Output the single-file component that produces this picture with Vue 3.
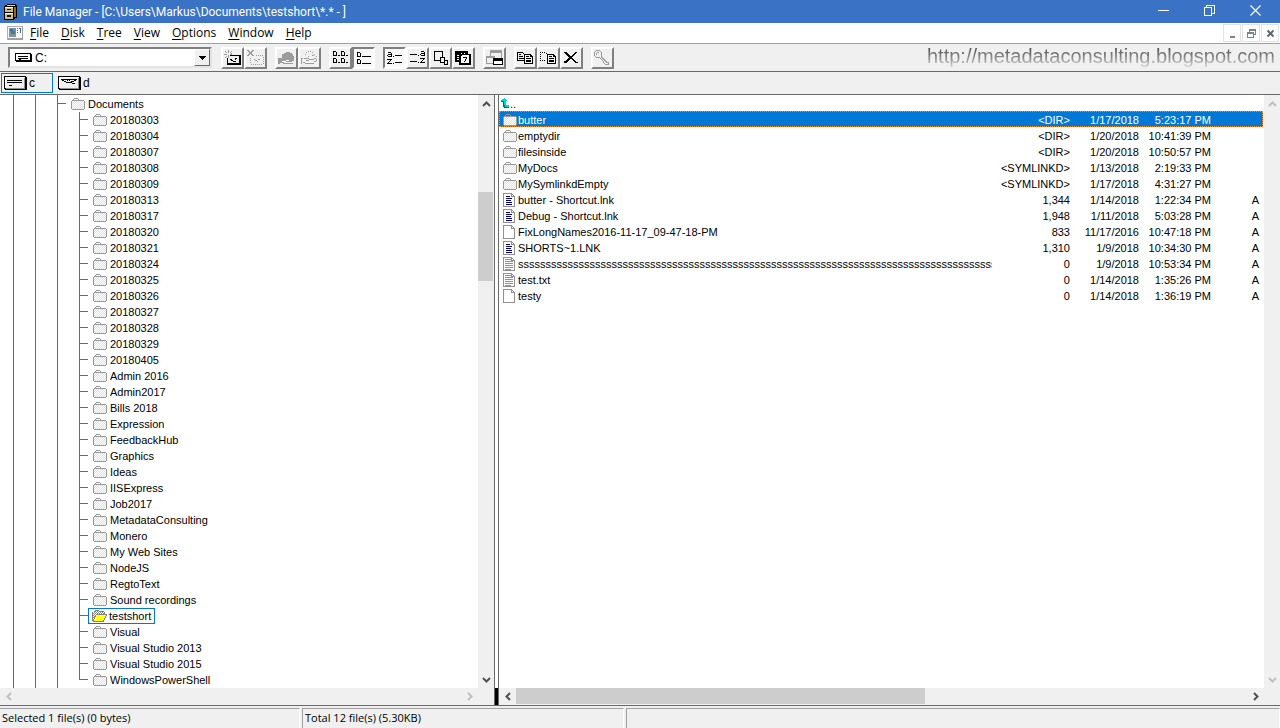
<script setup>
import { ref } from 'vue'

const menus = ['File', 'Disk', 'Tree', 'View', 'Options', 'Window', 'Help']

const folders = [
  '20180303', '20180304', '20180307', '20180308', '20180309', '20180313',
  '20180317', '20180320', '20180321', '20180324', '20180325', '20180326',
  '20180327', '20180328', '20180329', '20180405', 'Admin 2016', 'Admin2017',
  'Bills 2018', 'Expression', 'FeedbackHub', 'Graphics', 'Ideas', 'IISExpress',
  'Job2017', 'MetadataConsulting', 'Monero', 'My Web Sites', 'NodeJS',
  'RegtoText', 'Sound recordings', 'testshort', 'Visual',
  'Visual Studio 2013', 'Visual Studio 2015', 'WindowsPowerShell',
]
const current = ref('testshort')

const files = [
  { icon: 'dir', name: 'butter', size: '<DIR>', date: '1/17/2018', time: '5:23:17 PM', attr: '' },
  { icon: 'dir', name: 'emptydir', size: '<DIR>', date: '1/20/2018', time: '10:41:39 PM', attr: '' },
  { icon: 'dir', name: 'filesinside', size: '<DIR>', date: '1/20/2018', time: '10:50:57 PM', attr: '' },
  { icon: 'dir', name: 'MyDocs', size: '<SYMLINKD>', date: '1/13/2018', time: '2:19:33 PM', attr: '' },
  { icon: 'dir', name: 'MySymlinkdEmpty', size: '<SYMLINKD>', date: '1/17/2018', time: '4:31:27 PM', attr: '' },
  { icon: 'link', name: 'butter - Shortcut.lnk', size: '1,344', date: '1/14/2018', time: '1:22:34 PM', attr: 'A' },
  { icon: 'link', name: 'Debug - Shortcut.lnk', size: '1,948', date: '1/11/2018', time: '5:03:28 PM', attr: 'A' },
  { icon: 'file', name: 'FixLongNames2016-11-17_09-47-18-PM', size: '833', date: '11/17/2016', time: '10:47:18 PM', attr: 'A' },
  { icon: 'link', name: 'SHORTS~1.LNK', size: '1,310', date: '1/9/2018', time: '10:34:30 PM', attr: 'A' },
  { icon: 'text', name: 's'.repeat(95), size: '0', date: '1/9/2018', time: '10:53:34 PM', attr: 'A' },
  { icon: 'text', name: 'test.txt', size: '0', date: '1/14/2018', time: '1:35:26 PM', attr: 'A' },
  { icon: 'file', name: 'testy', size: '0', date: '1/14/2018', time: '1:36:19 PM', attr: 'A' },
]
const selected = ref('butter')

// Glyphs are drawn on a 19 x 18 grid: g = grey, k = black, fg/fk = filled shapes.
const tools = [
  [
    { id: 'connect', label: 'Connect network drive',
      k: 'M7 6.5h10M4.5 9v6M4 14.5h14M4 15.5h14M16.5 6v9M17.5 6v9M7 10.5h2M8 11.5h2M10 12.5h3M12 9.5h2M12 10.5h1',
      g: 'M5.5 1v3M5.5 6v3M1 5.5h3M7 5.5h2M2.5 2v1M3.5 3v1M8.5 2v1M7.5 3v1M2.5 8v1M3.5 7v1M8.5 4v1' },
    { id: 'disconnect', label: 'Disconnect network drive', off: true,
      g: 'M1 1.5h2M6 1.5h2M2 2.5h2M5 2.5h2M3 3.5h3M3 4.5h3M2 5.5h2M5 5.5h2M1 6.5h2M6 6.5h2M10 6.5h1M12 6.5h1M14 6.5h1M16 6.5h1M4.5 9v1M4.5 11v1M4.5 13v1M17.5 8v1M17.5 10v1M17.5 12v1M17.5 14v1M5 15.5h1M7 15.5h1M9 15.5h1M11 15.5h1M13 15.5h1M15 15.5h1M8 10.5h1M9 11.5h2M12 10.5h2M11 12.5h1' },
  ],
  [
    { id: 'share', label: 'Share as', off: true, fg: 'M5 5h2V4h2V3h4v1h2v1h1v2h1v5h-2v1H7v1h9v1H6v-1H3v1H1V9h4z',
      w: 'M5 12.5h4M9 11.5h3' },
    { id: 'unshare', label: 'Stop sharing', off: true,
      g: 'M6 3.5h1M8 2.5h1M10 2.5h1M12 3.5h1M5 5.5h1M14 5.5h1M16 7.5h1M1 9.5h2M4 9.5h5M9 10.5h5M6 11.5h3M1.5 10v5M14 9.5h2M16 10.5h1M16 11.5h1M14 12.5h2M5 14.5h9M3 13.5h2M12 6.5h2M8 7.5h1' },
  ],
  [
    { id: 'names', label: 'View name',
      k: 'M2 2.5h3M2.5 2v5M2 6.5h4M5.5 3v4M7 6.5h2M10 2.5h3M10.5 2v5M10 6.5h4M13.5 3v4M15 6.5h2M2 9.5h3M2.5 9v5M2 13.5h4M5.5 10v4M7 13.5h2M10 9.5h3M10.5 9v5M10 13.5h4M13.5 10v4M15 13.5h2' },
    { id: 'details', label: 'View file details', on: true,
      k: 'M3 3.5h3M3.5 3v5M3 7.5h4M6.5 4v4M8 7.5h9M3 10.5h3M3.5 10v5M3 14.5h4M6.5 11v4M8 14.5h9' },
  ],
  [
    { id: 'sort-name', label: 'Sort by name', on: true,
      k: 'M3 3.5h3M6.5 4v4M3 5.5h3M2.5 6v1M3 7.5h4M8 7.5h1M10 6.5h7M2 10.5h5M5 11.5h1M4 12.5h1M3 13.5h1M2 14.5h5M8 14.5h1M10 13.5h7' },
    { id: 'sort-type', label: 'Sort by type',
      k: 'M2 5.5h7M10 6.5h1M13 2.5h3M16.5 3v4M13 4.5h3M12.5 5v1M13 6.5h4M2 12.5h7M10 13.5h1M12 9.5h5M15 10.5h1M14 11.5h1M13 12.5h1M12 13.5h5' },
    { id: 'sort-size', label: 'Sort by size',
      k: 'M3 2.5h9M3.5 2v10M3 11.5h6M11.5 2v6M9 8.5h5M9.5 8v6M9 13.5h4M13.5 8v4M13 11.5h4M13.5 11v5M13 15.5h4M16.5 11v5' },
    { id: 'sort-date', label: 'Sort by date',
      fk: 'M1 2h13v3h3v11H5v-3H1z', w: 'M3 6.5h2M3 8.5h2M3 10.5h2M7 4.5h1M10 4.5h1M8 6.5h7M7 7.5h8M7 8.5h8M7 9.5h8M7 10.5h8M7 11.5h8M7 12.5h8M7 13.5h8',
      k2: 'M9 8.5h4M12.5 8v2M11.5 10v2M10.5 12v1' },
  ],
  [
    { id: 'new-window', label: 'New window', fg: 'M5 1h12v8h-1V4H6v3H5zM1 7h9v2H2v5h6v1H1z',
      fk: 'M8 9h10v7H8z', w: 'M9 12.5h8M9 13.5h8M9 14.5h8' },
  ],
  [
    { id: 'copy', label: 'Copy',
      k: 'M1 3.5h6M1.5 3v9M1 11.5h8M3 5.5h2M3 7.5h4M3 9.5h5M8 5.5h6M8.5 5v10M8 14.5h9M16.5 8v7M14.5 5v3M14 7.5h3M7.5 4v1M15.5 6v1M10 7.5h3M10 9.5h5M10 11.5h5M10 12.5h5' },
    { id: 'move', label: 'Move',
      k: 'M1 3.5h1M3 3.5h1M5 3.5h1M7 4.5h1M1.5 5v1M1.5 7v1M1.5 9v1M1 11.5h1M3 11.5h1M5 11.5h1M8 5.5h6M8.5 5v10M8 14.5h9M16.5 8v7M14.5 5v3M14 7.5h3M15.5 6v1M10 7.5h3M10 9.5h5M10 11.5h5M10 12.5h5' },
    { id: 'delete', label: 'Delete',
      fk: 'M2 3h3v1h1v1h1v1h1v1h2V6h1V5h1V4h1V3h2v1h-1v1h-1v1h-1v1h-1v1h-1v1h1v1h1v1h1v1h1v1h2v1h-3v-1h-1v-1h-1v-1h-1v-1H8v1H7v1H6v1H5v1H2v-2h2v-1h1v-1h1v-1h1V8H6V7H5V6H4V5H3V4H2z' },
  ],
  [
    { id: 'security', label: 'Permissions', off: true,
      g: 'M3 1.5h4M2.5 2v1M1.5 3v4M7.5 2v1M8.5 3v4M2.5 7v1M3 8.5h4M4 3.5h2M3.5 4v2M8 7.5h1M7 9.5h1M8 10.5h1M9 11.5h1M10 12.5h1M10 13.5h1M11 14.5h1M12 15.5h4M9 8.5h1M10 9.5h1M11 10.5h1M12 11.5h1M13 12.5h1M14 13.5h1M15.5 13v3M8 8.5h1M9 9.5h1M10 10.5h1M11 11.5h1M12 12.5h1M13 13.5h1' },
  ],
]
</script>

<template>
  <div class="window">
    <svg class="defs" width="0" height="0" aria-hidden="true">
      <defs>
        <symbol id="folder" viewBox="0 0 14 12">
          <path d="M1 2h12v9H1z" fill="#fff" />
          <path d="M1 3.5h12M1 5.5h12M1 7.5h12M1 9.5h12M2 4.5h11M2 6.5h11M2 8.5h11M2 10.5h11" stroke="#ff0" stroke-dasharray="1 1" />
          <path d="M2 1.5h1M3 .5h4M7 1.5h1M1 2.5h12M.5 3v8M1 11.5h12M13.5 3v8" stroke="#999" />
        </symbol>
        <symbol id="folder-open" viewBox="0 0 15 12">
          <path d="M1 3V2h2V1h4v1h5v3H5L2 10H1z" fill="#fff" />
          <path d="M3 1.5h4M2 2.5h10M1 3.5h11M2 4.5h2M1 5.5h3M2 6.5h1M1 7.5h2" stroke="#808080" stroke-dasharray="1 1" />
          <path d="M4 5h10v1h-1v2h-1v2h-1v1H2V9h1V7h1z" fill="#fff" />
          <path d="M5 5.5h9M4 6.5h9M5 7.5h8M4 8.5h8M3 9.5h9M2 10.5h9" stroke="#ff0" stroke-dasharray="1 1" />
          <path d="M2 1.5h1M3 .5h4M7 1.5h5M.5 2v9M12.5 2v3M4 4.5h11M14 5.5h1M13 6.5h1M13 7.5h1M12 8.5h1M12 9.5h1M11 10.5h1M1 11.5h11M3.5 5v2M2.5 7v2M1.5 9v2" stroke="#808080" />
        </symbol>
        <symbol id="page" viewBox="0 0 12 14">
          <path d="M.5.5h8l3 3v10H.5z" fill="#fff" stroke="#909090" />
          <path d="M8.5 0v4M8 3.5h4" stroke="#909090" />
        </symbol>
        <symbol id="drive" viewBox="0 0 23 14">
          <path d="M0 0h22v1h1v13H1v-1H0z" fill="#000" />
          <path d="M1 1h20v11H1z" fill="#efefef" />
          <path d="M1 1h20v1H2v10H1z" fill="#fff" />
          <path d="M20 2h1v11H2v-1h18z" fill="#909090" />
        </symbol>
      </defs>
    </svg>

    <header class="titlebar">
      <svg class="app-icon" width="13" height="16" viewBox="0 0 13 16" shape-rendering="crispEdges" aria-hidden="true">
        <path d="M0 2h1V1h2V0h9v1h1v13h-2v1h-1v1H0z" fill="#000" />
        <path d="M3 1h8v1H3z" fill="#e8d8a0" />
        <path d="M10 3h2v10h-2z" fill="#8c6a32" />
        <path d="M1 3h8v5H1zM1 9h8v6H1z" fill="#cdbd8c" />
        <path d="M1 3h8v1H1zM1 9h8v1H1z" fill="#fff" />
        <path d="M3 5h4v1H3zM3 11h4v2H3z" fill="#1c1810" />
      </svg>
      <h1>File Manager - [C:\Users\Markus\Documents\testshort\*.* - ]</h1>
      <div class="caption">
        <button type="button" aria-label="Minimize">
          <svg width="11" height="11" viewBox="0 0 11 11" shape-rendering="crispEdges"><path d="M0 5.5h11" stroke="#fff" /></svg>
        </button>
        <button type="button" aria-label="Restore">
          <svg width="11" height="11" viewBox="0 0 11 11" shape-rendering="crispEdges"><path d="M.5 2.5h7v8h-7zM2.5 2V.5h8v7.5H8" fill="none" stroke="#fff" /></svg>
        </button>
        <button type="button" aria-label="Close">
          <svg width="11" height="11" viewBox="0 0 11 11"><path d="M.5.5l10 10M10.5.5l-10 10" stroke="#fff" stroke-width="1.2" /></svg>
        </button>
      </div>
    </header>

    <nav class="menubar" aria-label="Main menu">
      <svg class="doc-icon" width="16" height="14" viewBox="0 0 16 14" shape-rendering="crispEdges" aria-hidden="true">
        <path d="M.5.5h15v13H.5z" fill="#fff" stroke="#b0b0b0" />
        <path d="M15.5 1v13M1 12.5h15M1 13.5h15" stroke="#a0a0a0" />
        <path d="M2 2h7v9H2z" fill="#7d94a8" />
        <path d="M3 3h3v2H3z" fill="#3b6fb0" />
        <path d="M4 5h4v3H4z" fill="#4e8068" />
        <path d="M10 2.5h1M12 2.5h1M10 4.5h1M13.5 2v5M10 6.5h1" stroke="#3b72c4" />
      </svg>
      <button v-for="m in menus" :key="m" type="button" class="menu"><u>{{ m[0] }}</u>{{ m.slice(1) }}</button>
      <div class="mdi">
        <button type="button" aria-label="Minimize document">
          <svg width="11" height="11" viewBox="0 0 11 11" shape-rendering="crispEdges"><path d="M3 8h5v2H3z" fill="#7a828c" /></svg>
        </button>
        <button type="button" aria-label="Restore document">
          <svg width="11" height="11" viewBox="0 0 11 11" shape-rendering="crispEdges">
            <path d="M3 1h7v6H8V6h1V3H4v1H3zM1 4h7v6H1zM2 6v3h5V6z" fill="#7a828c" fill-rule="evenodd" />
          </svg>
        </button>
        <button type="button" aria-label="Close document">
          <svg width="11" height="11" viewBox="0 0 11 11"><path d="M2.5 2.5l6 6M8.5 2.5l-6 6" stroke="#606870" stroke-width="2" /></svg>
        </button>
      </div>
    </nav>

    <div class="toolbar">
      <label class="combo">
        <svg width="17" height="9" viewBox="0 0 17 9" shape-rendering="crispEdges" aria-hidden="true">
          <path d="M0 0h16v1h1v8H1V8H0z" fill="#000" />
          <path d="M1 1h14v6H1z" fill="#fff" />
          <path d="M3 3.5h10M3 5.5h10M4 6.5h2" stroke="#000" />
        </svg>
        <select aria-label="Drive"><option>C:</option><option>D:</option></select>
        <span class="drop" aria-hidden="true">
          <svg width="7" height="4" viewBox="0 0 7 4" shape-rendering="crispEdges"><path d="M0 0h7v1H0zM1 1h5v1H1zM2 2h3v1H2zM3 3h1v1H3z" /></svg>
        </span>
      </label>
      <div v-for="(group, gi) in tools" :key="gi" class="group">
        <button v-for="t in group" :key="t.id" type="button" class="tool" :class="{ on: t.on }" :disabled="t.off" :aria-label="t.label">
          <svg width="19" height="18" viewBox="0 0 19 18" shape-rendering="crispEdges" fill="none" aria-hidden="true">
            <path v-if="t.fg" :d="t.fg" fill="#9c9c9c" />
            <path v-if="t.fk" :d="t.fk" fill="#000" />
            <path v-if="t.w" :d="t.w" stroke="#fff" />
            <path v-if="t.g" :d="t.g" stroke="#9c9c9c" />
            <path v-if="t.k" :d="t.k" stroke="#000" />
            <path v-if="t.k2" :d="t.k2" stroke="#000" />
          </svg>
        </button>
      </div>
      <span class="watermark">http://metadataconsulting.blogspot.com</span>
    </div>

    <div class="drives">
      <button type="button" class="drive active">
        <svg width="23" height="14" viewBox="0 0 23 14" shape-rendering="crispEdges" aria-hidden="true">
          <use href="#drive" />
          <path d="M3 4.5h15M3 6.5h15M5 9.5h3" stroke="#000" />
        </svg>c
      </button>
      <button type="button" class="drive">
        <svg width="23" height="14" viewBox="0 0 23 14" shape-rendering="crispEdges" aria-hidden="true">
          <use href="#drive" />
          <path d="M3 3.5h16M4 4.5h2M6 5.5h2M8 6.5h6M9 4.5h1M11 4.5h1M13 5.5h3M16 4.5h2M14 7.5h3" stroke="#000" />
        </svg>d
      </button>
    </div>

    <main class="panes">
      <section class="tree-pane" aria-label="Folders">
        <ul class="tree">
          <li class="root">
            <span class="branch"></span>
            <span class="node">
              <svg width="14" height="12" shape-rendering="crispEdges" aria-hidden="true"><use href="#folder" /></svg>Documents
            </span>
          </li>
          <li v-for="f in folders" :key="f" @click="current = f">
            <span class="branch"></span>
            <span class="node" :class="{ current: f === current }">
              <svg v-if="f === current" width="15" height="12" shape-rendering="crispEdges" aria-hidden="true"><use href="#folder-open" /></svg>
              <svg v-else width="14" height="12" shape-rendering="crispEdges" aria-hidden="true"><use href="#folder" /></svg>{{ f }}
            </span>
          </li>
        </ul>
        <div class="vscroll">
          <button type="button" aria-label="Scroll up"><svg width="9" height="6" viewBox="0 0 9 6"><path d="M1 5l3.500-3.500L8 5" /></svg></button>
          <div class="track"><div class="thumb"></div></div>
          <button type="button" aria-label="Scroll down"><svg width="9" height="6" viewBox="0 0 9 6"><path d="M1 1l3.500 3.500L8 1" /></svg></button>
        </div>
        <div class="hscroll">
          <button type="button" disabled aria-label="Scroll left"><svg width="6" height="9" viewBox="0 0 6 9"><path d="M5 1L1.500 4.500 5 8" /></svg></button>
          <div class="track"></div>
          <button type="button" disabled aria-label="Scroll right"><svg width="6" height="9" viewBox="0 0 6 9"><path d="M1 1l3.500 3.500L1 8" /></svg></button>
        </div>
        <div class="corner"></div>
      </section>

      <div class="splitter"><div class="grip"></div></div>

      <section class="list-pane" aria-label="Files">
        <div class="list">
          <table>
            <colgroup><col><col class="c-size"><col class="c-date"><col class="c-time"><col class="c-attr"></colgroup>
            <tbody>
              <tr>
                <td class="name" colspan="5">
                  <div class="cell up">
                    <svg width="8" height="10" viewBox="0 0 8 10" shape-rendering="crispEdges" aria-hidden="true">
                      <path d="M3 0h1v1h1v1h1v1H5v4h3v2H3V3H0V2h1V1h2z" fill="#00d8d8" />
                      <path d="M0 3h3v4h1v2h4v1H3V9H2V4H0z" fill="#006c6c" />
                    </svg>..
                  </div>
                </td>
              </tr>
              <tr v-for="f in files" :key="f.name" :class="{ selected: f.name === selected }" @click="selected = f.name">
                <td class="name">
                  <div class="cell">
                    <svg v-if="f.icon === 'dir'" width="14" height="12" shape-rendering="crispEdges" class="dir" aria-hidden="true"><use href="#folder" /></svg>
                    <svg v-else width="12" height="14" viewBox="0 0 12 14" shape-rendering="crispEdges" class="page" aria-hidden="true">
                      <use href="#page" />
                      <path v-if="f.icon === 'link'" d="M3 3.5h4M3 5.5h6M3 7.5h5M3 9.5h6M3 11.5h6" stroke="#000080" />
                      <path v-if="f.icon === 'text'" d="M2 2.5h6M2 4.5h8M2 6.5h8M2 8.5h8M2 10.5h8M2 12.5h6" stroke="#909090" />
                    </svg>
                    <span>{{ f.name }}</span>
                  </div>
                </td>
                <td>{{ f.size }}</td>
                <td>{{ f.date }}</td>
                <td>{{ f.time }}</td>
                <td class="attr">{{ f.attr }}</td>
              </tr>
            </tbody>
          </table>
        </div>
        <div class="vscroll">
          <button type="button" disabled aria-label="Scroll up"><svg width="9" height="6" viewBox="0 0 9 6"><path d="M1 5l3.500-3.500L8 5" /></svg></button>
          <div class="track"></div>
          <button type="button" disabled aria-label="Scroll down"><svg width="9" height="6" viewBox="0 0 9 6"><path d="M1 1l3.500 3.500L8 1" /></svg></button>
        </div>
        <div class="hscroll">
          <button type="button" aria-label="Scroll left"><svg width="6" height="9" viewBox="0 0 6 9"><path d="M5 1L1.500 4.500 5 8" /></svg></button>
          <div class="track"><div class="thumb"></div></div>
          <button type="button" aria-label="Scroll right"><svg width="6" height="9" viewBox="0 0 6 9"><path d="M1 1l3.500 3.500L1 8" /></svg></button>
        </div>
        <div class="corner"></div>
      </section>
    </main>

    <footer class="status">
      <div>Selected 1 file(s) (0 bytes)</div>
      <div>Total 12 file(s) (5.30KB)</div>
      <div></div>
    </footer>
  </div>
</template>

<style>
html,
body,
#app {
  height: 100%;
  margin: 0;
}
</style>

<style scoped>
* {
  box-sizing: border-box;
}
.window {
  display: flex;
  flex-direction: column;
  height: 100%;
  overflow: hidden;
  background: #f0f0f0;
  color: #000;
  font: 11px/16px "Liberation Sans", Arial, sans-serif;
}
.defs {
  position: absolute;
}
svg {
  display: block;
  flex: none;
}
button {
  display: flex;
  align-items: center;
  justify-content: center;
  margin: 0;
  padding: 0;
  border: 0;
  background: none;
  color: inherit;
  font: inherit;
}

.titlebar {
  display: flex;
  align-items: center;
  flex: none;
  height: 23px;
  padding-left: 4px;
  background: #3a72c6;
  color: #fff;
}
.titlebar h1 {
  margin: 0 0 0 6px;
  font: 12px/20px Roboto, sans-serif;
  white-space: pre;
}
.caption {
  display: flex;
  height: 21px;
  margin-left: auto;
  padding-right: 2px;
  align-self: flex-start;
}
.caption button {
  width: 46px;
}

.menubar {
  display: flex;
  align-items: center;
  flex: none;
  height: 21px;
  padding: 0 1px 0 7px;
  background: #fff;
  border-bottom: 1px solid #a0a0a0;
  font: 12px/18px "Open Sans", sans-serif;
}
.doc-icon {
  margin-right: 1px;
}
.menu {
  padding: 0 6px;
}
.menu u {
  text-underline-offset: 2px;
}
.mdi {
  display: flex;
  gap: 1px;
  margin-left: auto;
}
.mdi button {
  width: 18px;
  height: 18px;
  border: 1px solid #e2e2e2;
}

.toolbar {
  display: flex;
  align-items: center;
  flex: none;
  gap: 8px;
  height: 28px;
  padding: 0 5px 0 8px;
  border-bottom: 1px solid #696969;
}
.combo {
  display: flex;
  align-items: center;
  width: 204px;
  height: 21px;
  margin-right: 1px;
  padding-left: 5px;
  background: #fff;
  border: 2px solid;
  border-color: #808080 #e3e3e3 #e3e3e3 #808080;
}
.combo select {
  flex: 1;
  min-width: 0;
  padding: 0 0 0 3px;
  border: 0;
  background: none;
  appearance: none;
  color: #000;
  font: inherit;
  font-size: 12px;
}
.drop {
  display: flex;
  align-items: center;
  justify-content: center;
  width: 16px;
  height: 17px;
  background: #f0f0f0;
  border: 1px solid;
  border-color: #fff #696969 #696969 #fff;
}
.group {
  display: flex;
}
.tool {
  width: 23px;
  height: 22px;
  border: 2px solid;
  border-color: #fff #808080 #808080 #fff;
  background: #f0f0f0;
}
.tool.on {
  border-color: #808080 #fff #fff #808080;
  background: #f8f8f8;
}
.watermark {
  margin-left: auto;
  padding-bottom: 3px;
  font-size: 20px;
  line-height: 24px;
  white-space: nowrap;
  color: transparent;
  background: linear-gradient(#505050 15%, #8c8c8c 50%, #dedede 90%);
  background-clip: text;
}

.drives {
  display: flex;
  align-items: center;
  flex: none;
  gap: 2px;
  height: 23px;
  padding-left: 1px;
  border-bottom: 1px solid #696969;
}
.drive {
  justify-content: flex-start;
  gap: 2px;
  width: 52px;
  height: 20px;
  padding-left: 2px;
  border: 1px solid transparent;
  font-size: 12px;
}
.drive.active {
  border-color: #0078d7;
}

.panes {
  display: grid;
  grid-template-columns: minmax(0, 494fr) 5px minmax(0, 781fr);
  flex: 1;
  min-height: 0;
  border-bottom: 1px solid #696969;
}
.tree-pane,
.list-pane {
  display: grid;
  grid-template-columns: minmax(0, 1fr) 16px;
  grid-template-rows: minmax(0, 1fr) 17px;
  min-height: 0;
}
.tree {
  margin: 0;
  padding: 1px 0 0 57px;
  overflow: hidden;
  list-style: none;
  background:
    linear-gradient(#696969, #696969) 13px 0 / 1px 100% no-repeat,
    linear-gradient(#696969, #696969) 35px 0 / 1px 100% no-repeat,
    linear-gradient(#696969, #696969) 57px 0 / 1px 100% no-repeat,
    #fff;
}
.tree li {
  display: flex;
  height: 16px;
  padding-left: 22px;
}
.tree li.root {
  padding-left: 0;
}
.branch {
  width: 9px;
  background:
    linear-gradient(#696969, #696969) 0 7px / 9px 1px no-repeat,
    linear-gradient(#696969, #696969) 0 0 / 1px 100% no-repeat;
}
.tree li:last-child .branch {
  background-size: 9px 1px, 1px 8px;
}
.node {
  display: flex;
  align-items: center;
  gap: 3px;
  padding: 0 3px 0 5px;
  white-space: nowrap;
}
.node svg {
  align-self: flex-start;
  margin-top: 2px;
}
.node.current {
  gap: 2px;
  padding-left: 3px;
  border: 1px solid #0078d7;
}
.node.current svg {
  margin-top: 1px;
}

.vscroll,
.hscroll {
  display: flex;
  background: #f0f0f0;
}
.vscroll {
  flex-direction: column;
}
.vscroll button {
  height: 17px;
}
.hscroll button {
  width: 17px;
}
.track {
  display: flex;
  flex: 1;
  min-width: 0;
  min-height: 0;
}
.vscroll .track {
  flex-direction: column;
}
.vscroll .thumb {
  width: 15px;
  height: 16%;
  margin-top: 80px;
  background: #cdcdcd;
}
.hscroll .thumb {
  width: 56%;
  height: 16px;
  background: #cdcdcd;
}
.vscroll path,
.hscroll path {
  fill: none;
  stroke: #505050;
  stroke-width: 2;
}
.vscroll button:disabled path,
.hscroll button:disabled path {
  stroke: #bfbfbf;
}

.splitter {
  display: flex;
  flex-direction: column;
  justify-content: flex-end;
  background: #fff;
  border: solid #696969;
  border-width: 0 1px;
}
.grip {
  height: 17px;
  background: #000;
}

.list {
  padding-right: 1px;
  overflow: hidden;
  background: #fff;
}
table {
  width: 100%;
  table-layout: fixed;
  border-collapse: collapse;
}
.c-size {
  width: 78px;
}
.c-date {
  width: 69px;
}
.c-time {
  width: 72px;
}
.c-attr {
  width: 52px;
}
td {
  height: 16px;
  padding: 2px 0 0;
  line-height: 14px;
  text-align: right;
  white-space: nowrap;
}
td.attr {
  padding-right: 4px;
}
.cell {
  display: flex;
  gap: 1px;
  height: 14px;
  padding-left: 4px;
  overflow: hidden;
}
.cell.up {
  padding-left: 2px;
}
.cell.up svg,
.cell .dir {
  margin-top: 1px;
}
.cell .page {
  margin-right: 2px;
}
tr.selected {
  background: #0078d7;
  color: #fff;
  outline: 1px dotted #ff8728;
  outline-offset: -1px;
}

.status {
  display: flex;
  flex: none;
  gap: 2px;
  height: 22px;
  padding-top: 2px;
  font: 11px/18px "Open Sans", sans-serif;
}
.status div {
  flex: 0 0 322px;
  padding-left: 2px;
  border: solid;
  border-width: 1px 1px 0;
  border-color: #a0a0a0 #fff #fff #a0a0a0;
  white-space: nowrap;
}
.status div:first-child {
  flex-basis: 300px;
  border-left: 0;
}
.status div:last-child {
  flex: 1;
}
</style>
